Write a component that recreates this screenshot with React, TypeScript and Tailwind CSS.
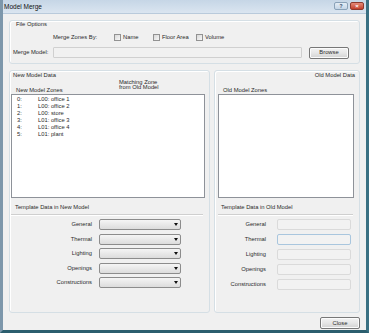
import React from 'react';

const zones = ['L00: office 1', 'L00: office 2', 'L00: store', 'L01: office 3', 'L01: office 4', 'L01: plant'];
const templateRows = ['General', 'Thermal', 'Lighting', 'Openings', 'Constructions'];

const Check = ({ label, width }: { label: string; width: string }) => (
  <div className={`flex items-center gap-[2px] ${width}`}>
    <span className="w-[7px] h-[7px] border border-[#929292] bg-linear-to-br from-[#d8d8d8] to-[#f7f7f7]" />
    <span>{label}</span>
  </div>
);

const Combo = () => (
  <div className="w-[82px] h-[11px] border border-[#8c8c8c] rounded-[2px] bg-linear-to-b from-[#f5f5f5] to-[#dcdcdc] flex items-center justify-end pr-[2px]">
    <span className="w-0 h-0 border-l-[2px] border-r-[2px] border-t-[3px] border-l-transparent border-r-transparent border-t-[#111]" />
  </div>
);

const Button = ({ label, width }: { label: string; width: string }) => (
  <div
    className={`${width} h-[12px] border border-[#777] rounded-[2px] bg-linear-to-b from-[#f3f3f3] via-[#e6e6e6] to-[#d2d2d2] flex items-center justify-center shadow-[inset_0_0_0_1px_#fbfbfb]`}
  >
    {label}
  </div>
);

export default function App() {
  return (
    <div className="w-[369px] h-[333px] flex flex-col bg-[#f0f0f0] border-l-[3px] border-l-[#7d97ab] border-r-[3px] border-r-[#3a7082] border-b-[3px] border-b-[#2b5e6e] font-['Liberation_Sans',Arial,sans-serif] text-[5.8px] leading-[7px] text-[#2a2a2a] overflow-hidden">
      {/* title bar */}
      <div className="h-[14px] flex justify-between bg-linear-to-b from-[#c6d6e6] to-[#dae5f0] border-b border-b-[#b9cadb]">
        <div className="pl-[1px] pt-[3px] text-[6.5px] leading-[8px] text-[#111]">Model Merge</div>
        <div className="flex gap-[2px] pt-[2px] pr-[2px]">
          <div className="w-[14px] h-[8px] rounded-[2px] border border-[#8aa2b8] bg-linear-to-b from-[#e4edf5] to-[#c4d5e6] flex items-center justify-center text-[5px] leading-[5px] text-[#2c4a66] font-bold">
            ?
          </div>
          <div className="w-[14px] h-[8px] rounded-[2px] border border-[#8e3a2e] bg-linear-to-b from-[#e58a78] to-[#c23d2a] flex items-center justify-center text-[6px] leading-[6px] text-white font-bold">
            ×
          </div>
        </div>
      </div>

      {/* client */}
      <div className="flex-1 flex flex-col px-[6px] pt-[6px]">
        {/* File Options */}
        <div className="h-[44px] flex flex-col border border-[#d5dfe5] rounded-[3px] shadow-[inset_1px_1px_0_#fff]">
          <div className="h-[7px] pl-[6px]">File Options</div>
          <div className="h-[8px] mt-[5px] flex items-center">
            <div className="w-[104px] pl-[43px]">Merge Zones By:</div>
            <Check label="Name" width="w-[39px]" />
            <Check label="Floor Area" width="w-[43px]" />
            <Check label="Volume" width="" />
          </div>
          <div className="h-[13px] mt-[5px] flex items-center">
            <div className="w-[43px] pl-[3px]">Merge Model:</div>
            <div className="w-[249px] h-[11px] border border-[#d0d0d0] bg-[#f1f1f1] rounded-[1px]" />
            <div className="ml-[7px]">
              <Button label="Browse" width="w-[40px]" />
            </div>
          </div>
        </div>

        {/* Data panels */}
        <div className="h-[243px] mt-[6px] flex gap-[4px]">
          {/* New model */}
          <div className="w-[201px] flex flex-col border border-[#d5dfe5] rounded-[3px] shadow-[inset_1px_1px_0_#fff]">
            <div className="h-[7px] mt-[1px] pl-[3px]">New Model Data</div>
            <div className="h-[15px] flex">
              <div className="w-[109px] pl-[6px] self-end">New Model Zones</div>
              <div className="pt-[1px] leading-[5px]">
                Matching Zone
                <br />
                from Old Model
              </div>
            </div>
            <div className="ml-[1px] mr-[4px] h-[104px] border border-[#8e9299] bg-white pt-[1px] pl-[5px]">
              {zones.map((z, i) => (
                <div key={z} className="flex">
                  <span className="w-[21px]">{i}:</span>
                  <span>{z}</span>
                </div>
              ))}
            </div>
            <div className="mt-[6px] pl-[5px]">Template Data in New Model</div>
            <div className="mt-[3px] ml-[1px] mr-[6px] h-[2px] border-t border-t-[#cfcfcf] border-b border-b-white" />
            <div className="mt-[3px] flex flex-col gap-[3.5px]">
              {templateRows.map((r) => (
                <div key={r} className="flex items-center h-[11px]">
                  <div className="w-[82px] text-right">{r}</div>
                  <div className="ml-[7px]">
                    <Combo />
                  </div>
                </div>
              ))}
            </div>
          </div>

          {/* Old model */}
          <div className="flex-1 flex flex-col border border-[#d5dfe5] rounded-[3px] shadow-[inset_1px_1px_0_#fff]">
            <div className="h-[7px] mt-[1px] pr-[4px] text-right">Old Model Data</div>
            <div className="h-[15px] flex items-end">
              <div className="pl-[8px]">Old Model Zones</div>
            </div>
            <div className="ml-[3px] mr-[5px] h-[104px] border border-[#8e9299] bg-white" />
            <div className="mt-[6px] pl-[6px]">Template Data in Old Model</div>
            <div className="mt-[3px] ml-[3px] mr-[6px] h-[2px] border-t border-t-[#cfcfcf] border-b border-b-white" />
            <div className="mt-[3px] flex flex-col gap-[4px]">
              {templateRows.map((r) => (
                <div key={r} className="flex items-center h-[11px]">
                  <div className="w-[51px] text-right">{r}</div>
                  <div
                    className={`ml-[11px] w-[74px] h-[11px] rounded-[2px] bg-[#f2f2f2] border ${
                      r === 'Thermal' ? 'border-[#a9c6de]' : 'border-[#dadada]'
                    }`}
                  />
                </div>
              ))}
            </div>
          </div>
        </div>

        <div className="mt-[4px] flex justify-end">
          <Button label="Close" width="w-[40px]" />
        </div>
      </div>
    </div>
  );
}
